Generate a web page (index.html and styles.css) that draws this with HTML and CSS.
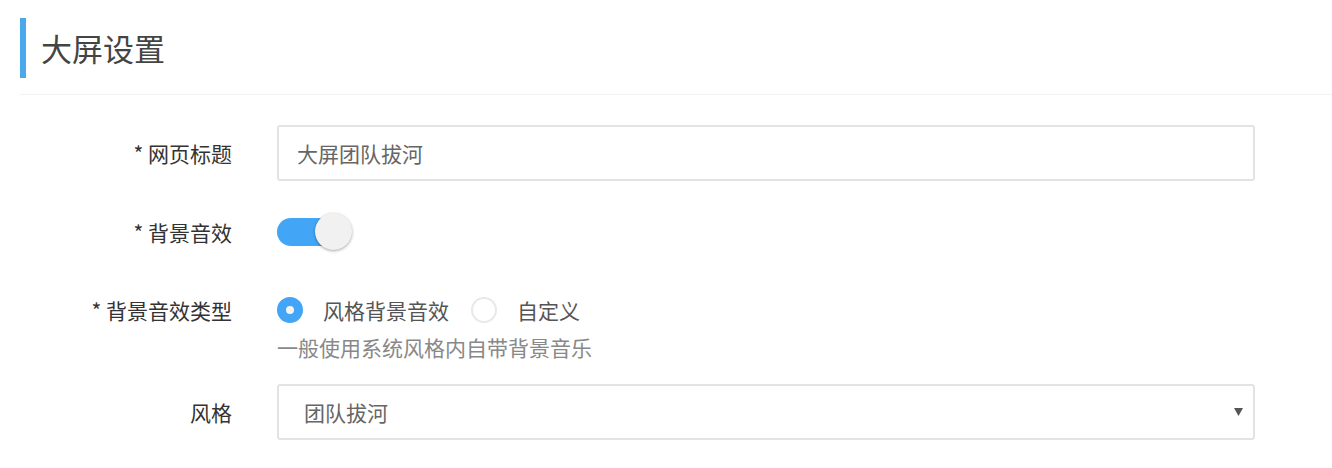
FILE: index.html
```html
<!DOCTYPE html>
<html lang="zh-CN">
<head>
<meta charset="utf-8">
<title>大屏设置</title>
<link rel="stylesheet" href="styles.css">
</head>
<body>
<div class="page">
  <div class="header">
    <h1 class="title">大屏设置</h1>
  </div>
  <form class="form">
    <div class="row row-input">
      <label class="label">* 网页标题</label>
      <div class="control">
        <div class="input">大屏团队拔河</div>
      </div>
    </div>
    <div class="row row-switch">
      <label class="label">* 背景音效</label>
      <div class="control">
        <span class="switch"><span class="track"></span><span class="thumb"></span></span>
      </div>
    </div>
    <div class="row row-radio">
      <label class="label">* 背景音效类型</label>
      <div class="control">
        <div class="radios">
          <span class="radio checked"></span><span class="radio-text">风格背景音效</span>
          <span class="radio"></span><span class="radio-text">自定义</span>
        </div>
        <div class="help">一般使用系统风格内自带背景音乐</div>
      </div>
    </div>
    <div class="row row-input">
      <label class="label">风格</label>
      <div class="control">
        <div class="select">
          <span class="select-text">团队拔河</span>
          <svg class="arrow" width="9" height="8" viewBox="0 0 9 8"><path d="M0 0H9L4.5 8Z" fill="#555"/></svg>
        </div>
      </div>
    </div>
  </form>
</div>
</body>
</html>
```

FILE: styles.css
```css
html, body {
  margin: 0;
  padding: 0;
  background: #fff;
}
body {
  font-family: "Noto Sans CJK SC", "Noto Sans", sans-serif;
  color: #444;
}
.page {
  padding: 18px 0 0 20px;
}
.header {
  padding-bottom: 16px;
  border-bottom: 1px solid #f2f2f2;
}
.title {
  margin: 0;
  height: 60px;
  line-height: 60px;
  border-left: 6px solid #4aa8ec;
  padding-left: 15px;
  font-size: 31px;
  font-weight: normal;
  color: #444;
}
.form {
  padding-top: 30px;
}
.row {
  display: flex;
  align-items: flex-start;
}
.label {
  width: 212px;
  flex: none;
  text-align: right;
  font-size: 21px;
  color: #333;
  margin-right: 45px;
}
.control {
  flex: 1;
  margin-right: 77px;
}
.row-input .label {
  line-height: 56px;
}
.input, .select {
  box-sizing: border-box;
  height: 56px;
  border: 2px solid #e3e3e5;
  border-radius: 3px;
  font-size: 21px;
  color: #666;
  line-height: 52px;
}
.input {
  padding-left: 18px;
}
.select {
  display: flex;
  justify-content: space-between;
  align-items: center;
  padding: 0 10px 0 25px;
}
.select-text {
  line-height: 52px;
}
.row-input:first-child {
  margin-bottom: 28px;
}
.row-switch {
  height: 46px;
  margin-bottom: 35px;
}
.row-switch .label {
  line-height: 46px;
}
.switch {
  display: block;
  position: relative;
  width: 76px;
  height: 38px;
  margin-top: 4px;
}
.track {
  position: absolute;
  left: 0;
  top: 5px;
  width: 60px;
  height: 28px;
  border-radius: 14px;
  background: #42a5f5;
}
.thumb {
  position: absolute;
  left: 38px;
  top: 0;
  width: 37px;
  height: 37px;
  border-radius: 50%;
  background: #f1f1f1;
  box-shadow: 0 1px 3px rgba(0,0,0,0.35);
}
.row-radio {
  margin-bottom: 20px;
}
.row-radio .label {
  line-height: 40px;
}
.radios {
  display: flex;
  align-items: center;
  height: 40px;
}
.radio {
  box-sizing: border-box;
  width: 26px;
  height: 26px;
  border-radius: 50%;
  border: 2px solid #e8e8e8;
  background: #fff;
  flex: none;
}
.radio.checked {
  border: 9px solid #42a5f5;
  background: #f4f4f4;
}
.radio-text {
  font-size: 21px;
  color: #555;
  margin-left: 20px;
  margin-right: 22px;
}
.help {
  font-size: 21px;
  color: #888;
  line-height: 34px;
}
.arrow {
  display: block;
}
```
